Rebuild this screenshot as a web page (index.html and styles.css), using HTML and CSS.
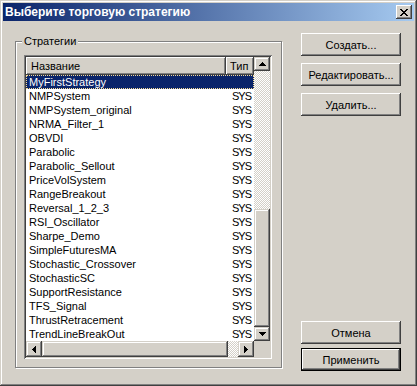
FILE: index.html
```html
<!DOCTYPE html>
<html lang="ru">
<head>
  <meta charset="UTF-8">
  <title>Выберите торговую стратегию</title>
  <link rel="stylesheet" href="styles.css">
</head>
<body>
  <div class="window">
    <div class="titlebar">
      <span class="title">Выберите торговую стратегию</span>
      <button class="close-btn" aria-label="Закрыть">
        <svg width="8" height="7" viewBox="0 0 8 7">
          <rect x="0" y="0" width="2" height="1"/><rect x="6" y="0" width="2" height="1"/>
          <rect x="1" y="1" width="2" height="1"/><rect x="5" y="1" width="2" height="1"/>
          <rect x="2" y="2" width="4" height="1"/>
          <rect x="3" y="3" width="2" height="1"/>
          <rect x="2" y="4" width="4" height="1"/>
          <rect x="1" y="5" width="2" height="1"/><rect x="5" y="5" width="2" height="1"/>
          <rect x="0" y="6" width="2" height="1"/><rect x="6" y="6" width="2" height="1"/>
        </svg>
      </button>
    </div>

    <div class="dialog-body">
      <div class="group">
        <span class="group-label">Стратегии</span>
        <div class="list">
          <div class="list-main">
            <div class="list-header">
              <div class="col-name">Название</div>
              <div class="col-type">Тип</div>
            </div>
            <div class="row selected"><span class="cell-name">MyFirstStrategy</span><span class="cell-type"></span></div>
            <div class="row"><span class="cell-name">NMPSystem</span><span class="cell-type">SYS</span></div>
            <div class="row"><span class="cell-name">NMPSystem_original</span><span class="cell-type">SYS</span></div>
            <div class="row"><span class="cell-name">NRMA_Filter_1</span><span class="cell-type">SYS</span></div>
            <div class="row"><span class="cell-name">OBVDI</span><span class="cell-type">SYS</span></div>
            <div class="row"><span class="cell-name">Parabolic</span><span class="cell-type">SYS</span></div>
            <div class="row"><span class="cell-name">Parabolic_Sellout</span><span class="cell-type">SYS</span></div>
            <div class="row"><span class="cell-name">PriceVolSystem</span><span class="cell-type">SYS</span></div>
            <div class="row"><span class="cell-name">RangeBreakout</span><span class="cell-type">SYS</span></div>
            <div class="row"><span class="cell-name">Reversal_1_2_3</span><span class="cell-type">SYS</span></div>
            <div class="row"><span class="cell-name">RSI_Oscillator</span><span class="cell-type">SYS</span></div>
            <div class="row"><span class="cell-name">Sharpe_Demo</span><span class="cell-type">SYS</span></div>
            <div class="row"><span class="cell-name">SimpleFuturesMA</span><span class="cell-type">SYS</span></div>
            <div class="row"><span class="cell-name">Stochastic_Crossover</span><span class="cell-type">SYS</span></div>
            <div class="row"><span class="cell-name">StochasticSC</span><span class="cell-type">SYS</span></div>
            <div class="row"><span class="cell-name">SupportResistance</span><span class="cell-type">SYS</span></div>
            <div class="row"><span class="cell-name">TFS_Signal</span><span class="cell-type">SYS</span></div>
            <div class="row"><span class="cell-name">ThrustRetracement</span><span class="cell-type">SYS</span></div>
            <div class="row"><span class="cell-name">TrendLineBreakOut</span><span class="cell-type">SYS</span></div>
          </div>

          <div class="vscroll">
            <div class="sb-btn sb-v">
              <svg width="7" height="4" viewBox="0 0 7 4"><rect x="3" y="0" width="1" height="1"/><rect x="2" y="1" width="3" height="1"/><rect x="1" y="2" width="5" height="1"/><rect x="0" y="3" width="7" height="1"/></svg>
            </div>
            <div class="sb-track"></div>
            <div class="sb-thumb vthumb"></div>
            <div class="sb-btn sb-v">
              <svg width="7" height="4" viewBox="0 0 7 4"><rect x="0" y="0" width="7" height="1"/><rect x="1" y="1" width="5" height="1"/><rect x="2" y="2" width="3" height="1"/><rect x="3" y="3" width="1" height="1"/></svg>
            </div>
          </div>

          <div class="hscroll">
            <div class="sb-btn sb-h">
              <svg width="4" height="7" viewBox="0 0 4 7"><rect x="0" y="3" width="1" height="1"/><rect x="1" y="2" width="1" height="3"/><rect x="2" y="1" width="1" height="5"/><rect x="3" y="0" width="1" height="7"/></svg>
            </div>
            <div class="sb-thumb hthumb"></div>
            <div class="sb-track"></div>
            <div class="sb-btn sb-h">
              <svg width="4" height="7" viewBox="0 0 4 7"><rect x="0" y="0" width="1" height="7"/><rect x="1" y="1" width="1" height="5"/><rect x="2" y="2" width="1" height="3"/><rect x="3" y="3" width="1" height="1"/></svg>
            </div>
          </div>

          <div class="corner"></div>
        </div>
      </div>

      <div class="buttons">
        <div class="btn-group">
          <button class="btn">Создать...</button>
          <button class="btn">Редактировать...</button>
          <button class="btn">Удалить...</button>
        </div>
        <div class="btn-group btn-group-bottom">
          <button class="btn">Отмена</button>
          <button class="btn btn-default">Применить</button>
        </div>
      </div>
    </div>
  </div>
</body>
</html>
```

FILE: styles.css
```css
body {
  margin: 0;
  font-family: "Liberation Sans", Arial, sans-serif;
  font-size: 11px;
  color: #000;
}

.window {
  width: 417px;
  height: 386px;
  box-sizing: border-box;
  padding: 3px;
  background: #d4d0c8;
  box-shadow: inset -1px -1px #404040, inset 1px 1px #d4d0c8,
              inset -2px -2px #808080, inset 2px 2px #fff;
}

/* title bar */
.titlebar {
  height: 18px;
  display: flex;
  align-items: center;
  justify-content: space-between;
  padding: 0 2px;
  background: linear-gradient(to right, #0a246a, #a6caf0);
}

.title {
  color: #fff;
  font-weight: bold;
  font-size: 12px;
}

.close-btn {
  width: 16px;
  height: 14px;
  padding: 0;
  border: none;
  background: #d4d0c8;
  display: flex;
  align-items: center;
  justify-content: center;
  box-shadow: inset -1px -1px #404040, inset 1px 1px #fff,
              inset -2px -2px #808080, inset 2px 2px #d4d0c8;
}

/* body */
.dialog-body {
  display: flex;
  align-items: flex-start;
  padding-left: 12px;
}

.group {
  position: relative;
  width: 267px;
  height: 327px;
  box-sizing: border-box;
  margin-top: 20px;
  padding: 13px 0 0 8px;
  border: 1px solid #808080;
  box-shadow: inset 1px 1px #fff, 1px 1px #fff;
}

.group-label {
  position: absolute;
  top: -7px;
  left: 6px;
  padding: 0 2px;
  background: #d4d0c8;
  line-height: 13px;
}

/* list view */
.list {
  width: 248px;
  height: 304px;
  box-sizing: border-box;
  padding: 2px;
  display: grid;
  grid-template-columns: 228px 16px;
  grid-template-rows: 284px 16px;
  background: #d4d0c8;
  box-shadow: inset 1px 1px #808080, inset -1px -1px #fff,
              inset 2px 2px #404040, inset -2px -2px #d4d0c8;
}

.list-main {
  background: #fff;
  overflow: hidden;
}

.list-header {
  display: flex;
  height: 18px;
  line-height: 18px;
}

.col-name,
.col-type {
  box-sizing: border-box;
  background: #d4d0c8;
  box-shadow: inset -1px -1px #404040, inset 1px 1px #fff,
              inset -2px -2px #808080;
  white-space: nowrap;
  overflow: hidden;
}

.col-name {
  width: 200px;
  padding-left: 5px;
}

.col-type {
  width: 28px;
  padding-left: 4px;
}

.row {
  display: flex;
  height: 14px;
  line-height: 14px;
  white-space: nowrap;
}

.cell-name {
  width: 200px;
  padding-left: 3px;
  box-sizing: border-box;
}

.cell-type {
  padding-left: 6px;
  letter-spacing: -1px;
}

.row.selected {
  background: #0a246a;
  color: #fff;
  outline: 1px dotted #f5db95;
  outline-offset: -1px;
}

/* scroll bars */
.vscroll {
  display: flex;
  flex-direction: column;
}

.hscroll {
  display: flex;
}

.sb-btn,
.sb-thumb {
  background: #d4d0c8;
  box-shadow: inset -1px -1px #404040, inset 1px 1px #d4d0c8,
              inset -2px -2px #808080, inset 2px 2px #fff;
}

.sb-btn {
  display: flex;
  align-items: center;
  justify-content: center;
}

.sb-v {
  height: 14px;
}

.sb-h {
  width: 16px;
}

.sb-track {
  flex: 1;
  background: repeating-conic-gradient(#fff 0 25%, #d4d0c8 0 50%) 0 0 / 2px 2px;
}

.vthumb {
  height: 118px;
}

.hthumb {
  width: 186px;
}

.corner {
  background: #d4d0c8;
}

/* buttons */
.buttons {
  margin-left: 19px;
  margin-top: 12px;
  height: 338px;
  display: flex;
  flex-direction: column;
  justify-content: space-between;
}

.btn-group {
  display: flex;
  flex-direction: column;
  gap: 7px;
}

.btn-group-bottom {
  gap: 4px;
}

.btn {
  width: 100px;
  height: 23px;
  padding: 0;
  border: none;
  background: #d4d0c8;
  font-family: "Liberation Sans", Arial, sans-serif;
  font-size: 11px;
  color: #000;
  box-shadow: inset -1px -1px #404040, inset 1px 1px #fff,
              inset -2px -2px #808080, inset 2px 2px #d4d0c8;
}

.btn-default {
  border: 1px solid #000;
  box-shadow: inset -1px -1px #404040, inset 1px 1px #fff,
              inset -2px -2px #808080, inset 2px 2px #d4d0c8;
}
```
